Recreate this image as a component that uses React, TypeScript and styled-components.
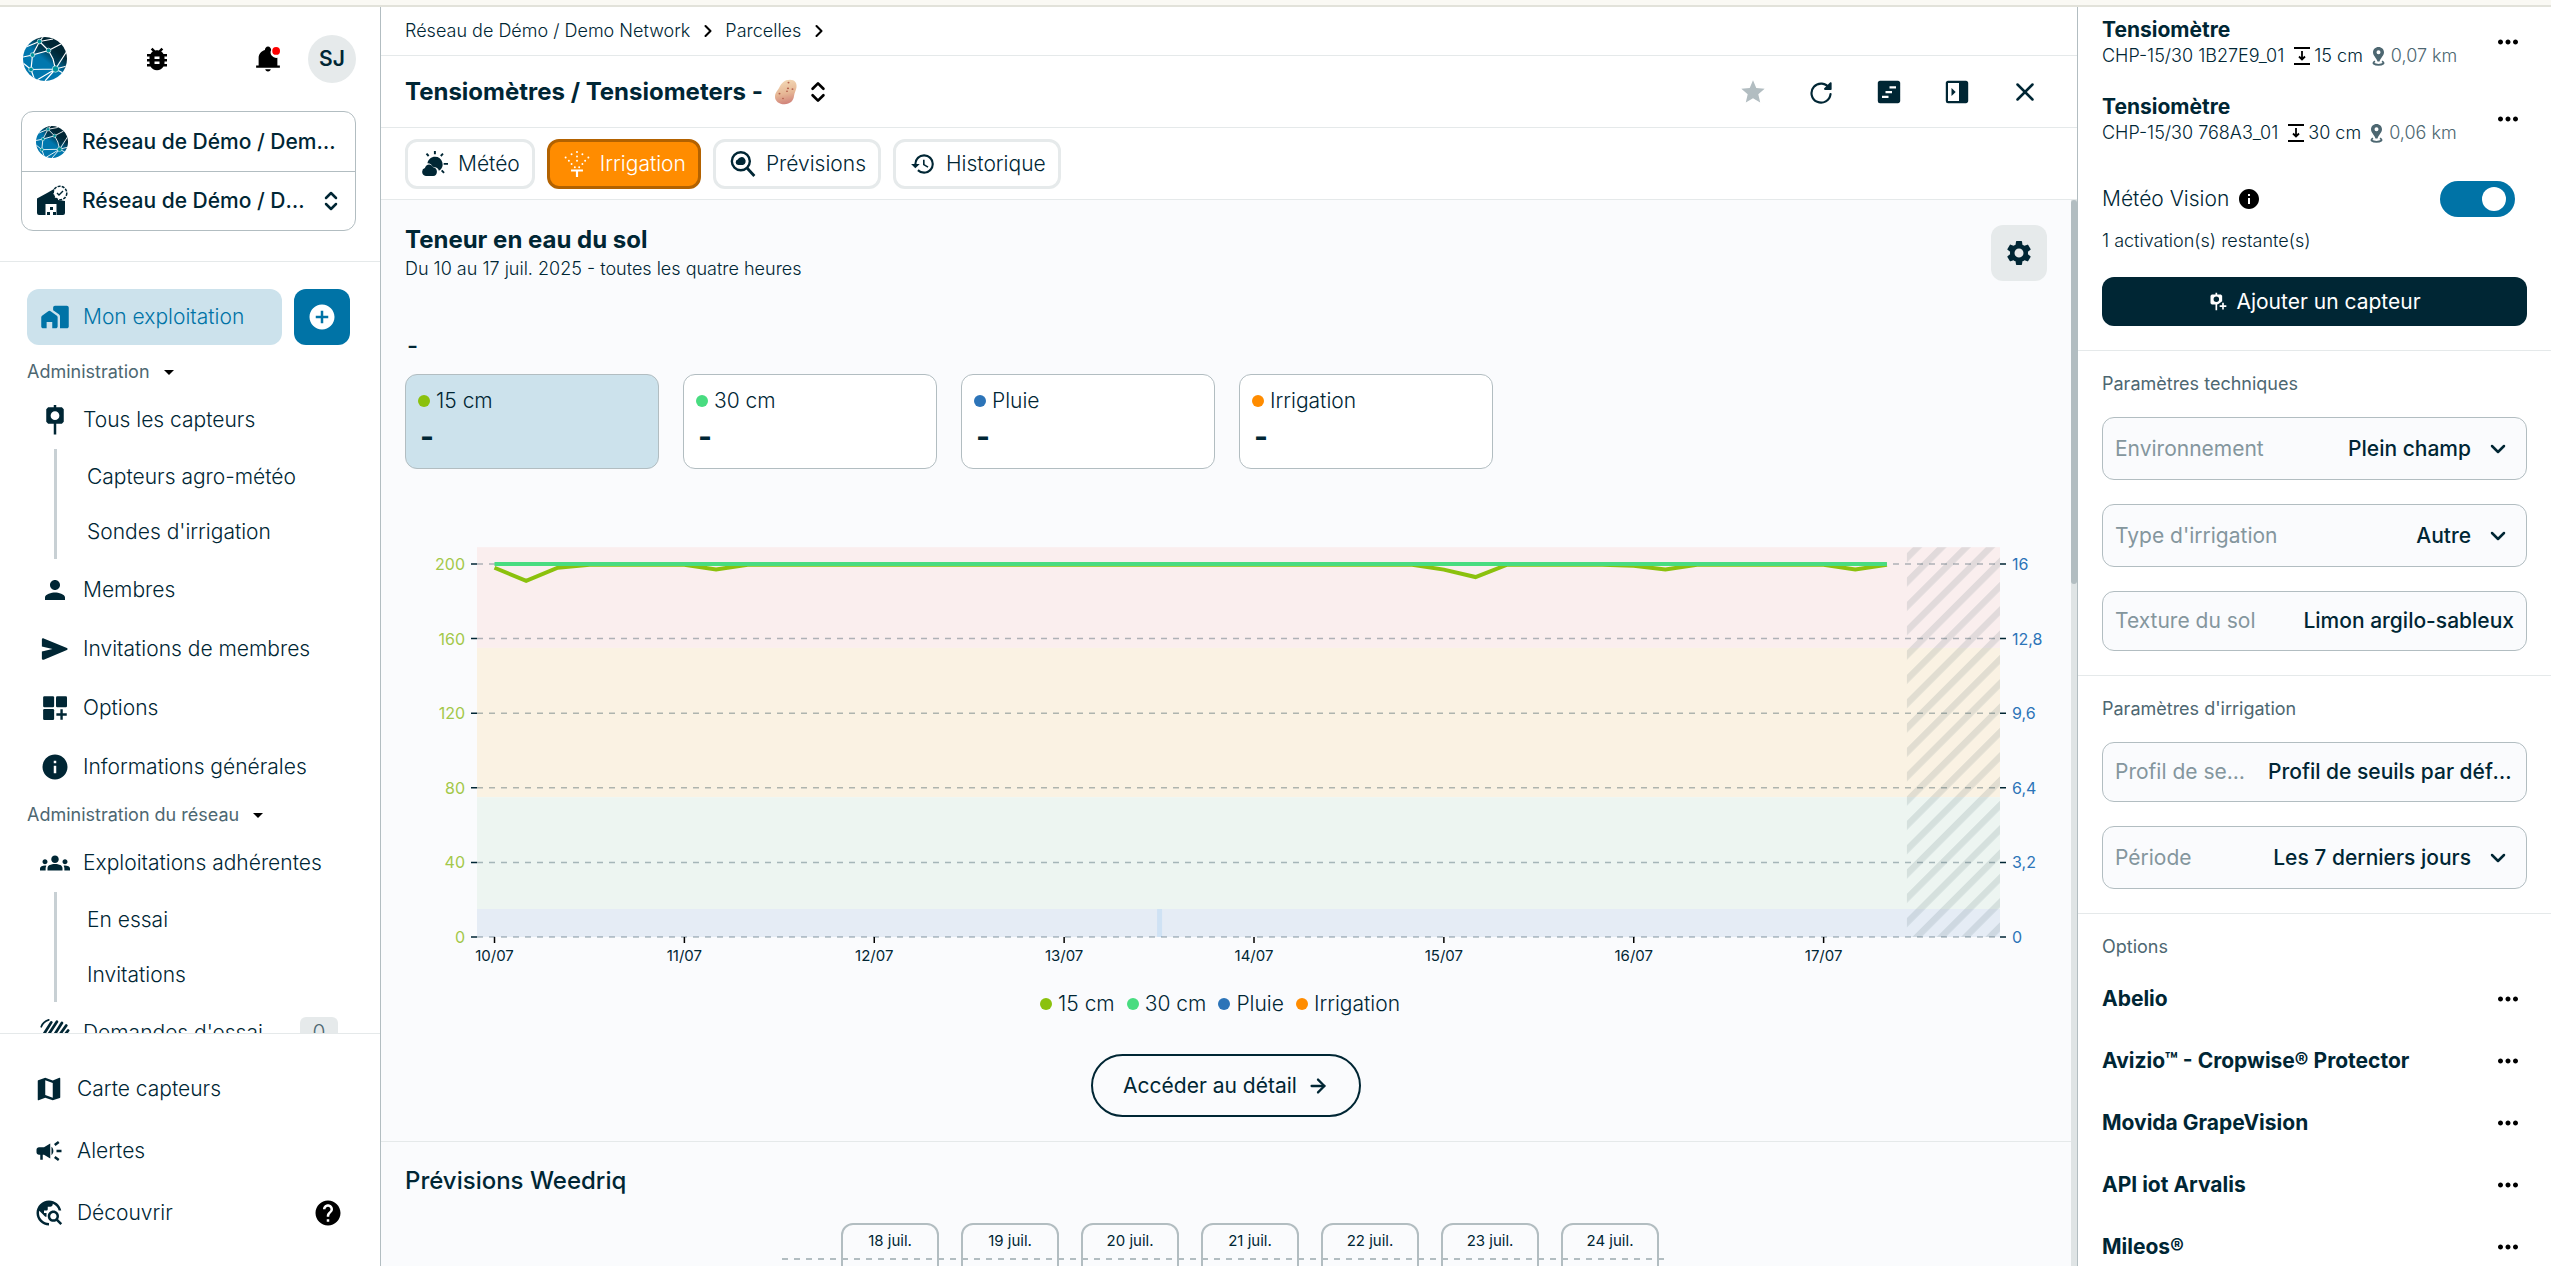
import React, { useId, useLayoutEffect, useRef, useState } from "react";
import styled, { createGlobalStyle, css } from "styled-components";
import { ArrowRight, ChevronDown, ChevronRight, ChevronsUpDown, X } from "lucide-react";
import {
  MdAddCircle,
  MdArrowDropDown,
  MdBugReport,
  MdCampaign,
  MdGroups,
  MdHelp,
  MdHistory,
  MdInfo,
  MdMap,
  MdMoreHoriz,
  MdPerson,
  MdSettings,
  MdStar,
  MdTravelExplore,
} from "react-icons/md";

const color = {
  ink: "#002634",
  muted: "#4d6771",
  faint: "#84969d",
  line: "#b2bdc1",
  rule: "#e5e9ea",
  chip: "#e6eaeb",
  page: "#fafbfd",
  blue: "#0073a6",
  sky: "#cce2ec",
  orange: "#ff8c00",
  lime: "#8bc10d",
  mint: "#48dc80",
  rain: "#2c74b8",
};

const GlobalStyle = createGlobalStyle`
  *, *::before, *::after { box-sizing: border-box; }
  body {
    margin: 0;
    color: ${color.ink};
    background: #fff;
    font-family: Inter, "Liberation Sans", sans-serif;
    font-size: 21px;
    line-height: 24px;
    overflow: hidden;
  }
  button, select, input { font: inherit; color: inherit; }
  button { padding: 0; border: 0; background: none; cursor: pointer; }
  h1, h2, h3, p, ul { margin: 0; padding: 0; }
  ul { list-style: none; }
  a { color: inherit; text-decoration: none; }
  svg { display: block; flex: none; }
`;

/* ---------- drawings ---------- */

type IconProps = { size?: number };

const Glyph = ({ size = 30, children }: IconProps & { children: React.ReactNode }) => (
  <svg width={size} height={size} viewBox="0 0 24 24" fill="currentColor" aria-hidden="true">
    {children}
  </svg>
);

const Logo = ({ size }: { size: number }) => {
  const id = useId();
  return (
    <svg width={size} height={size} viewBox="0 0 44 44" aria-hidden="true">
      <defs>
        <linearGradient id={`${id}g`} x1="0.2" y1="0.85" x2="0.8" y2="0.1">
          <stop offset="0.45" stopColor="#0077ae" />
          <stop offset="0.8" stopColor="#002634" />
        </linearGradient>
        <clipPath id={`${id}c`}>
          <circle cx="22" cy="22" r="22" />
        </clipPath>
      </defs>
      <g clipPath={`url(#${id}c)`}>
        <rect width="44" height="44" fill={`url(#${id}g)`} />
        <path d="M16 4 25 13 9 18ZM20 0l5 13 18-9-10 28Z" fill="#002634" opacity="0.55" />
        <g stroke="#fff" strokeWidth="1.2" fill="none">
          <path d="M16.500 4.500 25.500 13.500 9.500 18 8 32.500 32.500 32 30 22 25.500 13.500 38 7M32.500 32 44 14M16.500 4.500 9.500 18 0 20M16.500 4.500 3 10M16.500 4.500 20 0M16.500 4.500 30 2M8 32.500 0 26M8 32.500 12 44M32.500 32 14 43M32.500 32 22 44M32.500 32 40 36M32.500 32 44 29" />
        </g>
        <g fill="#00939b" stroke="#fff" strokeWidth="0.6">
          <circle cx="16.500" cy="4.500" r="2.300" />
          <circle cx="25.500" cy="13.500" r="2.300" />
          <circle cx="9.500" cy="18" r="2.300" />
          <circle cx="8" cy="32.500" r="2.300" />
          <circle cx="32.500" cy="32" r="3.200" />
        </g>
      </g>
    </svg>
  );
};

const FarmIcon = () => (
  <svg width="32" height="32" viewBox="0 0 32 32" aria-hidden="true">
    <path d="M1 13.500 12 7.500 18 4v5l4 6 7 1v12a2 2 0 0 1-2 2h-6.500V19h-11v11H3a2 2 0 0 1-2-2Z" fill={color.ink} />
    <path d="M14 22h3v3h-3zM11 27h3v3h-3zM17 27h3v3h-3z" fill={color.ink} />
    <circle cx="24" cy="8" r="6.800" fill="#fff" stroke={color.ink} strokeWidth="1.500" strokeDasharray="3 1.200" />
    <path d="m21 8 2 2 4-4" fill="none" stroke={color.ink} strokeWidth="1.400" />
  </svg>
);

const BellIcon = () => (
  <svg width="30" height="30" viewBox="0 0 24 24" aria-hidden="true">
    <path d="M2.500 19v-1.800h2V11c0-3 2-5.500 5-6.300C9.500 3.500 10.500 2 12 2s2.500 1.500 2.500 2.700A4.500 4.500 0 0 0 19.500 11v6.200h2V19zM12 22c-1.200 0-2.200-.9-2.200-1.800h4.400c0 .9-1 1.800-2.200 1.800z" fill="#000" />
    <circle cx="18.500" cy="5.500" r="3.100" fill="#f00" />
  </svg>
);

const HomesIcon = () => (
  <Glyph>
    <path d="M1 12.200c0-.5.2-.9.600-1.200l5-3.600a1.600 1.600 0 0 1 1.900 0l5 3.600c.4.300.6.700.6 1.200v7.300c0 .8-.7 1.500-1.500 1.500H9.800v-5H5.300v5H2.500C1.700 21 1 20.300 1 19.500z" />
    <path d="M10.500 4.500C10.500 3.700 11.200 3 12 3h9.500c.8 0 1.500.7 1.500 1.500v15c0 .8-.7 1.500-1.500 1.500H16v-9.500c0-.7-.3-1.300-.9-1.700l-4.600-3.300z" />
  </Glyph>
);

const SensorIcon = () => (
  <Glyph>
    <path fillRule="evenodd" d="M11 0h2v1.800h4.500L19 3.300v10L17.500 15H13v8.500h-2V15H6.500L5 13.300v-10l1.500-1.500H11zM12 5a3.500 3.500 0 1 0 0 7A3.500 3.500 0 0 0 12 5z" />
  </Glyph>
);

const SensorAddIcon = ({ size = 20 }: IconProps) => (
  <Glyph size={size}>
    <path fillRule="evenodd" d="M9 1h2v2h4.500L17 4.500v6.700l-4 2.800-2 1v7H9v-7H4.500L3 13.500v-9L4.500 3H9zm1 4.500a3.300 3.300 0 1 0 0 6.600 3.300 3.300 0 0 0 0-6.600z" />
    <path d="M17 13h2v3h3v2h-3v3h-2v-3h-3v-2h3z" />
  </Glyph>
);

const SendIcon = () => (
  <Glyph>
    <path d="M1.500 18.500V14L10 12 1.500 10V4.500c0-.9.800-1.300 1.500-1l18.500 7.700c.8.300.8 1.300 0 1.600L3 20.500c-.7.300-1.500-.1-1.500-1z" />
  </Glyph>
);

const WidgetsIcon = () => (
  <Glyph>
    <rect x="2.500" y="2.500" width="8.800" height="8.800" rx="1" />
    <rect x="12.800" y="2.500" width="8.800" height="8.800" rx="1" />
    <rect x="2.500" y="12.800" width="8.800" height="8.800" rx="1" />
    <path d="M16.300 13h1.900v3.200h3.200v1.900h-3.200v3.200h-1.900v-3.200h-3.200v-1.900h3.200z" />
  </Glyph>
);

const WaveHandIcon = () => (
  <Glyph>
    <g stroke="currentColor" strokeWidth="2.200" strokeLinecap="round" fill="none">
      <path d="M3 13 9 3.500M5 16 13.500 3M8 19 17.500 4M11 20 21 6M14 21 22.500 10M4 12c-3 6 2 11 7 10" />
      <path d="M1 7C2 4 4 2.500 7 1.500" strokeWidth="1.400" />
    </g>
  </Glyph>
);

const SunCloudIcon = ({ size }: IconProps) => (
  <Glyph size={size}>
    <path d="M11 0h1.800v3H11zM3.500 3l1.300-1.200 2 2.200-1.300 1.200zM18.800 1.800 20 3l-2 2.200-1.300-1.200zM20 11h4v1.800h-4zM17.500 18.500l1.300-1.200 2.200 2.200-1.300 1.200z" />
    <path d="M9.800 14.500A4.900 4.900 0 0 0 5 11.200c.8-3.400 3.600-5.900 7-5.900a7 7 0 0 1 3.600 13c-.4-2-2.200-3.500-5.800-3.800z" />
    <path d="M3.500 23a3.700 3.700 0 0 1-.8-7.200c.6-4 6-4.800 7.500-.8 4.500-.2 5 8 0 8z" />
  </Glyph>
);

const SprinklerIcon = ({ size }: IconProps) => (
  <Glyph size={size}>
    <path d="M6.500 17h11v2H13v5h-2v-5H6.500z" />
    {[[12, 1], [12, 5], [12, 9], [1.500, 6], [4.500, 9], [7, 12], [10, 15], [22.500, 6], [19.500, 9], [17, 12], [14, 15], [7, 3], [17, 3]].map(([x, y]) => (
      <circle key={`${x}-${y}`} cx={x} cy={y} r="0.900" />
    ))}
  </Glyph>
);

const ForecastIcon = ({ size }: IconProps) => (
  <Glyph size={size}>
    <circle cx="10" cy="9.500" r="8.300" fill="none" stroke="currentColor" strokeWidth="2.200" />
    <path d="m15.500 15.500 7 7.500" stroke="currentColor" strokeWidth="2.600" />
    <path d="M7.500 13a2.600 2.600 0 0 1-.3-5.100A3.800 3.800 0 1 1 12 13z" />
  </Glyph>
);

const RefreshIcon = () => (
  <Glyph size={26}>
    <path d="M19.600 8.500A8.800 8.800 0 1 0 20.800 14" fill="none" stroke="currentColor" strokeWidth="2" strokeLinecap="round" />
    <path d="M20.300 3.300c.6-.6 1.500-.2 1.500.7v5.200c0 .5-.4.900-.9.900h-5.200c-.8 0-1.200-1-.7-1.500z" />
  </Glyph>
);

const GanttIcon = () => (
  <Glyph size={24}>
    <path fillRule="evenodd" d="M3 .8h18c1.200 0 2.200 1 2.200 2.200v18c0 1.200-1 2.200-2.200 2.200H3A2.200 2.200 0 0 1 .8 21V3C.8 1.800 1.800.8 3 .8zM12.500 6.200v2.300h6.500V6.200zM8.500 11v2.300h6.500V11zM5 15.800v2.300h6.500v-2.300z" />
  </Glyph>
);

const PanelIcon = () => (
  <Glyph size={24}>
    <path fillRule="evenodd" d="M3 .8h18c1.200 0 2.200 1 2.200 2.200v18c0 1.200-1 2.200-2.200 2.200H3A2.200 2.200 0 0 1 .8 21V3C.8 1.800 1.800.8 3 .8zM3 3v18h11V3z" />
    <path d="m6.500 8 4.200 4-4.200 4z" />
  </Glyph>
);

const DepthIcon = () => (
  <svg width="18" height="20" viewBox="0 0 18 20" aria-hidden="true">
    <path d="M1 2h16M1 18h16M9 5v8M6 10.500l3 3 3-3" fill="none" stroke="#000" strokeWidth="1.800" />
  </svg>
);

const PinIcon = () => (
  <svg width="13" height="20" viewBox="0 0 13 20" aria-hidden="true" fill="currentColor">
    <path fillRule="evenodd" d="M6.500 1C3.400 1 1 3.400 1 6.300 1 9.800 4.500 12 5.500 15.500h2C8.500 12 12 9.800 12 6.300 12 3.400 9.600 1 6.500 1zm0 3.200a2 2 0 1 1 0 4 2 2 0 0 1 0-4z" />
    <path d="M3 15.300c-3.500 2-.500 3.500 3.500 3.500s7-1.500 3.500-3.500" fill="none" stroke="currentColor" strokeWidth="1.800" />
  </svg>
);

const Potato = () => (
  <svg width="24" height="26" viewBox="0 0 24 32" preserveAspectRatio="none" role="img" aria-label="Pomme de terre">
    <defs>
      <linearGradient id="potato-skin" x1="0.4" y1="0" x2="0.6" y2="1">
        <stop offset="0" stopColor="#f3d9b6" />
        <stop offset="0.55" stopColor="#e6b795" />
        <stop offset="1" stopColor="#cf7f78" />
      </linearGradient>
    </defs>
    <path d="M16 1c5 0 7 4 6.500 9-.5 4-2 6-2.500 11-.5 6-4 10-9.500 10S1 27 1 22c0-5 2-7 4-11C7.500 5 10.500 1 16 1z" fill="url(#potato-skin)" />
    <g fill="#b4614d">
      <circle cx="14.500" cy="4.500" r="1" />
      <circle cx="14" cy="11.500" r="1.100" />
      <circle cx="18.500" cy="12.500" r="1" />
      <circle cx="13" cy="15" r="1" />
      <circle cx="5.500" cy="18" r="1" />
      <circle cx="9" cy="24" r="0.900" />
    </g>
  </svg>
);

/* ---------- shell ---------- */

const Shell = styled.div`
  display: grid;
  grid-template-columns: 381px minmax(0, 1fr) 474px;
  height: 100vh;
  border-top: 5px solid #faf9f4;
  box-shadow: inset 0 2px 0 #e2e2da;
  padding-top: 2px;
`;

const Sidebar = styled.aside`
  display: flex;
  flex-direction: column;
  min-height: 0;
  border-right: 1px solid ${color.line};
`;

const SideTop = styled.header`
  display: flex;
  flex-direction: column;
  gap: 28px;
  padding: 28px 24px 30px 21px;
  border-bottom: 1px solid ${color.rule};
`;

const SideTopBar = styled.div`
  display: flex;
  align-items: center;
  justify-content: space-between;
  padding-left: 2px;
`;

const IconButton = styled.button<{ $color?: string }>`
  display: grid;
  place-items: center;
  width: 44px;
  height: 44px;
  color: ${(p) => p.$color ?? color.ink};
`;

const TopActions = styled.div`
  display: flex;
  align-items: center;
  gap: 18px;
`;

const Avatar = styled.button`
  width: 48px;
  height: 48px;
  border-radius: 50%;
  background: ${color.chip};
  font-weight: 600;
`;

const OrgBox = styled.div`
  border: 1px solid ${color.line};
  border-radius: 12px;
`;

const OrgRow = styled.button`
  display: flex;
  align-items: center;
  gap: 14px;
  width: 100%;
  height: 59px;
  padding: 0 12px 0 14px;
  font-weight: 500;
  text-align: left;
  & + & {
    border-top: 1px solid ${color.line};
  }
`;

const Clip = styled.span`
  flex: 1;
  min-width: 0;
  overflow: hidden;
  text-overflow: ellipsis;
  white-space: nowrap;
`;

const NavScroll = styled.nav`
  flex: 1;
  min-height: 0;
  overflow: hidden;
  padding: 27px 30px 0 27px;
`;

const FarmRow = styled.div`
  display: flex;
  gap: 12px;
  padding-bottom: 8px;
`;

const FarmLink = styled.a`
  display: flex;
  flex: 1;
  align-items: center;
  gap: 13px;
  height: 56px;
  padding: 0 13px;
  border-radius: 12px;
  color: ${color.blue};
  background: ${color.sky};
  font-weight: 300;
`;

const AddFarm = styled.button`
  display: grid;
  place-items: center;
  width: 56px;
  height: 56px;
  border-radius: 12px;
  color: #fff;
  background: ${color.blue};
`;

const GroupTitle = styled.button`
  display: flex;
  align-items: center;
  gap: 7px;
  height: 37px;
  color: ${color.muted};
  font-size: 18px;
  svg {
    color: #000;
  }
`;

const NavLink = styled.a`
  display: flex;
  align-items: center;
  gap: 13px;
  height: 59px;
  padding: 0 12px 0 13px;
  font-weight: 300;
`;

const SubList = styled.ul`
  margin: 0 0 1px 27px;
  padding-left: 30px;
  border-left: 3px solid #c8d0d4;
  font-weight: 300;
`;

const SubLink = styled.a`
  display: flex;
  align-items: center;
  height: 55px;
`;

const Counter = styled.span`
  width: 38px;
  margin-left: auto;
  border-radius: 6px;
  color: ${color.muted};
  background: ${color.chip};
  line-height: 32px;
  text-align: center;
`;

const SideFoot = styled.footer`
  padding: 24px 37px 22px 34px;
  border-top: 1px solid ${color.rule};
`;

const FootRow = styled.div`
  display: flex;
  align-items: center;
  justify-content: space-between;
  height: 62px;
  font-weight: 300;
  a {
    display: flex;
    align-items: center;
    gap: 13px;
  }
  button {
    color: #000;
  }
`;

/* ---------- main column ---------- */

const Main = styled.main`
  display: flex;
  flex-direction: column;
  min-width: 0;
  min-height: 0;
`;

const Bar = styled.div<{ $height: number; $gap?: number }>`
  display: flex;
  flex: none;
  align-items: center;
  gap: ${(p) => p.$gap ?? 0}px;
  height: ${(p) => p.$height}px;
  padding: 0 30px 0 24px;
  border-bottom: 1px solid ${color.rule};
`;

const Crumb = styled.a`
  display: flex;
  align-items: center;
  gap: 8px;
  font-size: 18px;
  font-weight: 300;
  svg {
    color: #000;
  }
`;

const Title = styled.h1`
  font-size: 24px;
  font-weight: 700;
`;

const Crop = styled.div`
  display: flex;
  align-items: center;
  gap: 6px;
`;

const Switcher = styled.button`
  display: grid;
  place-items: center;
  width: 28px;
  height: 36px;
  color: #000;
`;

const BarActions = styled.div`
  display: flex;
  gap: 24px;
  margin-left: auto;
`;

const Tab = styled.button<{ $active?: boolean }>`
  display: flex;
  align-items: center;
  gap: 10px;
  height: 50px;
  padding: 0 12px 0 14px;
  border: 3px solid ${color.chip};
  border-radius: 12px;
  background: #fff;
  font-weight: 300;
  ${(p) =>
    p.$active &&
    css`
      border-color: #b36200;
      color: #fff;
      background: ${color.orange};
    `}
`;

const ScrollArea = styled.div`
  display: flex;
  flex: 1;
  min-height: 0;
  background: ${color.page};
`;

const ScrollBody = styled.div`
  flex: 1;
  min-width: 0;
  overflow: hidden;
`;

const ScrollRail = styled.div`
  flex: none;
  width: 6px;
  background: #dfe4e5;
`;

const ScrollThumb = styled.div`
  height: 36%;
  border-radius: 3px;
  background: ${color.line};
`;

const Section = styled.section`
  padding: 24px 24px;
  border-bottom: 1px solid ${color.rule};
`;

const SectionHead = styled.div`
  display: flex;
  align-items: center;
  justify-content: space-between;
  padding-top: 1px;
`;

const HeadText = styled.div`
  display: flex;
  flex-direction: column;
  gap: 2px;
`;

const SectionTitle = styled.h2<{ $weight?: number }>`
  font-size: 24px;
  font-weight: ${(p) => p.$weight ?? 700};
  line-height: 30px;
`;

const SmallText = styled.p`
  font-size: 18px;
  font-weight: 300;
`;

const GearButton = styled.button`
  display: grid;
  place-items: center;
  width: 56px;
  height: 56px;
  border-radius: 12px;
  background: ${color.chip};
`;

const HoverDate = styled.p`
  padding: 50px 0 13px 2px;
  font-size: 24px;
  font-weight: 500;
  line-height: 30px;
`;

const Cards = styled.div`
  display: flex;
  gap: 24px;
`;

const Card = styled.button<{ $active?: boolean }>`
  display: flex;
  flex-direction: column;
  gap: 8px;
  width: 254px;
  height: 95px;
  padding: 14px 12px;
  border: 1px solid ${color.line};
  border-radius: 12px;
  background: ${(p) => (p.$active ? color.sky : "#fff")};
  text-align: left;
`;

const CardValue = styled.strong`
  padding-left: 2px;
  font-size: 30px;
  font-weight: 700;
  line-height: 30px;
`;

const Series = styled.span`
  display: flex;
  align-items: center;
  gap: 6px;
  font-weight: 300;
`;

const Dot = styled.i<{ $color: string }>`
  width: 12px;
  height: 12px;
  border-radius: 50%;
  background: ${(p) => p.$color};
`;

const ChartBox = styled.div`
  margin-top: 78px;
  svg {
    width: 100%;
  }
`;

const Legend = styled.ul`
  display: flex;
  justify-content: center;
  margin-top: 25px;
  li {
    margin-right: 12px;
  }
`;

const DetailRow = styled.div`
  display: flex;
  justify-content: center;
  margin-top: 38px;
`;

const DetailLink = styled.a`
  display: flex;
  align-items: center;
  gap: 10px;
  height: 63px;
  padding: 0 30px;
  border: 2px solid ${color.ink};
  border-radius: 32px;
`;

const Forecast = styled.div`
  position: relative;
  display: flex;
  justify-content: center;
  gap: 22px;
  width: fit-content;
  margin: 27px auto 0;
  padding: 0 11px 0 59px;
  &::after {
    content: "";
    position: absolute;
    top: 35px;
    left: 0;
    right: 6px;
    height: 2px;
    background: repeating-linear-gradient(90deg, ${color.line} 0 6px, transparent 6px 12px);
  }
`;

const Day = styled.div`
  width: 98px;
  height: 300px;
  padding-top: 4px;
  border: 2px solid ${color.line};
  border-radius: 12px;
  font-size: 15px;
  text-align: center;
`;

/* ---------- right panel ---------- */

const Panel = styled.aside`
  min-height: 0;
  overflow: hidden;
  border-left: 1px solid ${color.line};
`;

const Block = styled.section<{ $top: number }>`
  padding: ${(p) => p.$top}px 24px 24px;
  & + & {
    border-top: 1px solid ${color.rule};
  }
`;

const Device = styled.div`
  display: flex;
  align-items: center;
  justify-content: space-between;
  height: 70px;
  & + & {
    margin-top: 7px;
  }
`;

const DeviceText = styled.div`
  padding-top: 2px;
`;

const Strong = styled.h3`
  font-size: 21px;
  font-weight: 700;
`;

const DeviceMeta = styled.p`
  display: flex;
  align-items: center;
  gap: 9px;
  padding-top: 2px;
  font-size: 18px;
  font-weight: 300;
`;

const Measure = styled.span<{ $muted?: boolean }>`
  display: flex;
  align-items: center;
  gap: ${(p) => (p.$muted ? 6 : 3)}px;
  color: ${(p) => (p.$muted ? color.muted : "inherit")};
`;

const More = styled.button`
  display: grid;
  place-items: center;
  width: 38px;
  height: 38px;
  color: #000;
`;

const ToggleRow = styled.div`
  display: flex;
  align-items: center;
  gap: 8px;
  margin: 27px 12px 12px 0;
  font-weight: 300;
  svg {
    color: #000;
  }
`;

const Toggle = styled.input`
  appearance: none;
  display: flex;
  align-items: center;
  justify-content: flex-end;
  width: 75px;
  height: 36px;
  margin: 0 0 0 auto;
  padding: 0 9px;
  border-radius: 18px;
  background: ${color.blue};
  &::before {
    content: "";
    width: 24px;
    height: 24px;
    border-radius: 50%;
    background: #fff;
  }
`;

const Primary = styled.button`
  display: flex;
  align-items: center;
  justify-content: center;
  gap: 8px;
  width: 100%;
  height: 49px;
  margin-top: 24px;
  border-radius: 12px;
  color: #fff;
  background: ${color.ink};
`;

const Caption = styled.h2`
  color: ${color.muted};
  font-size: 18px;
  font-weight: 400;
  line-height: 24px;
`;

const Fields = styled.div`
  display: flex;
  flex-direction: column;
  gap: 24px;
  margin-top: 21px;
`;

const fieldBox = css`
  display: flex;
  align-items: center;
  gap: 12px;
  width: 100%;
  padding: 0 12px;
  border: 1px solid ${color.line};
  border-radius: 12px;
  background: ${color.page};
`;

const SelectField = styled.div`
  ${fieldBox}
  height: 63px;
  label {
    color: ${color.faint};
    white-space: nowrap;
  }
`;

const SelectStack = styled.div`
  display: grid;
  flex: 1;
  align-items: center;
  justify-items: end;
  padding-right: 4px;
  select,
  svg {
    grid-area: 1 / 1;
  }
  svg {
    pointer-events: none;
  }
  select {
    appearance: none;
    width: 100%;
    height: 61px;
    padding: 0 39px 0 0;
    border: 0;
    background: transparent;
    font-weight: 500;
    text-align-last: right;
  }
`;

const ButtonField = styled.button`
  ${fieldBox}
  height: 60px;
  text-align: right;
`;

const FieldName = styled.span`
  flex: none;
  max-width: 141px;
  overflow: hidden;
  color: ${color.faint};
  text-overflow: ellipsis;
  white-space: nowrap;
`;

const FieldValue = styled(Clip)`
  font-weight: 500;
`;

const OptionRow = styled.li`
  display: flex;
  align-items: center;
  justify-content: space-between;
  height: 62px;
`;

const OptionList = styled.ul`
  margin-top: 9px;
`;

/* ---------- data ---------- */

const series = [
  { name: "15 cm", tint: color.lime },
  { name: "30 cm", tint: color.mint },
  { name: "Pluie", tint: color.rain },
  { name: "Irrigation", tint: color.orange },
];

const STEPS = 45;
const dips: Record<number, number> = { 0: 198, 1: 191, 2: 198, 7: 197, 30: 197, 31: 193, 36: 199, 37: 197, 43: 197 };
const shallow = Array.from({ length: STEPS }, (_, i) => dips[i] ?? 199.6);
const days = ["10/07", "11/07", "12/07", "13/07", "14/07", "15/07", "16/07", "17/07"];
const leftTicks = [200, 160, 120, 80, 40, 0];
const rightTicks = ["16", "12,8", "9,6", "6,4", "3,2", "0"];
const bands = [
  { from: 155, to: 209, fill: "#faeeee" },
  { from: 75, to: 155, fill: "#faf2e3" },
  { from: 15, to: 75, fill: "#edf5f1" },
  { from: 0, to: 15, fill: "#e5ecf5" },
];

const Chart = () => {
  const box = useRef<HTMLDivElement>(null);
  const [width, setWidth] = useState(1642);
  useLayoutEffect(() => {
    const el = box.current;
    if (!el) return;
    const measure = () => setWidth(el.clientWidth);
    measure();
    const observer = new ResizeObserver(measure);
    observer.observe(el);
    return () => observer.disconnect();
  }, []);

  const left = 72;
  const right = width - 47;
  const plot = right - left;
  const x = (step: number) => left + plot * 0.0115 + (step * plot * 0.12467) / 6;
  const y = (v: number) => 390 - v * 1.865;
  const hatch = x(44) + 20;

  return (
    <ChartBox ref={box}>
      <svg height="420" aria-label="Teneur en eau du sol" role="img">
        <defs>
          <pattern id="hatch" width="17.200" height="17.200" patternUnits="userSpaceOnUse" patternTransform="rotate(45)">
            <rect width="6.500" height="17.200" fill={color.ink} opacity="0.1" />
          </pattern>
        </defs>
        {bands.map((b) => (
          <rect key={b.from} x={left} width={plot} y={y(b.to)} height={y(b.from) - y(b.to)} fill={b.fill} />
        ))}
        <rect x={x(21) - 2} y={y(15)} width="5" height={y(0) - y(15)} fill="#cfe2f4" />
        {leftTicks.map((v, i) => (
          <g key={v} fontSize="16">
            <path d={`M${left} ${y(v)}H${right}`} stroke={color.ink} strokeOpacity="0.3" strokeWidth="1.500" strokeDasharray="6 6" />
            <path d={`M${left - 6} ${y(v)}h6M${right} ${y(v)}h6`} stroke={color.ink} strokeWidth="1.500" />
            <text x={left - 12} y={y(v) + 6} textAnchor="end" fill="#a3c849">{v}</text>
            <text x={right + 12} y={y(v) + 6} fill={color.rain}>{rightTicks[i]}</text>
          </g>
        ))}
        <rect x={hatch} y={y(209)} width={right - hatch} height={y(0) - y(209)} fill="url(#hatch)" />
        {days.map((d, i) => (
          <g key={d} fontSize="15">
            <path d={`M${x(i * 6)} ${y(0)}v6`} stroke="#000" strokeWidth="1.500" />
            <text x={x(i * 6)} y={y(0) + 24} textAnchor="middle" fill={color.ink}>{d}</text>
          </g>
        ))}
        <polyline points={shallow.map((v, i) => `${x(i)},${y(v)}`).join(" ")} fill="none" stroke={color.lime} strokeWidth="4" />
        <path d={`M${x(0)} ${y(200)}H${x(44)}`} stroke={color.mint} strokeWidth="4" />
      </svg>
    </ChartBox>
  );
};

const SeriesLabel = ({ name, tint }: { name: string; tint: string }) => (
  <Series>
    <Dot $color={tint} />
    {name}
  </Series>
);

const Select = ({ id, label, value }: { id: string; label: string; value: string }) => (
  <SelectField>
    <label htmlFor={id}>{label}</label>
    <SelectStack>
      <select id={id} defaultValue={value}>
        <option>{value}</option>
      </select>
      <ChevronDown size={24} strokeWidth={2.500} />
    </SelectStack>
  </SelectField>
);

const Picker = ({ label, value }: { label: string; value: string }) => (
  <ButtonField>
    <FieldName>{label}</FieldName>
    <FieldValue>{value}</FieldValue>
  </ButtonField>
);

const DeviceRow = ({ code, depth, distance }: { code: string; depth: string; distance: string }) => (
  <Device>
    <DeviceText>
      <Strong>Tensiomètre</Strong>
      <DeviceMeta>
        {code}
        <Measure>
          <DepthIcon />
          {depth}
        </Measure>
        <Measure $muted>
          <PinIcon />
          {distance}
        </Measure>
      </DeviceMeta>
    </DeviceText>
    <More aria-label="Plus d'actions">
      <MdMoreHoriz size={30} />
    </More>
  </Device>
);

export default function App() {
  return (
    <>
      <GlobalStyle />
      <Shell>
        <Sidebar>
          <SideTop>
            <SideTopBar>
              <Logo size={44} />
              <IconButton $color="#000" aria-label="Signaler un bug">
                <MdBugReport size={30} />
              </IconButton>
              <TopActions>
                <IconButton aria-label="Notifications">
                  <BellIcon />
                </IconButton>
                <Avatar>SJ</Avatar>
              </TopActions>
            </SideTopBar>
            <OrgBox>
              <OrgRow>
                <Logo size={32} />
                <Clip>Réseau de Démo / Demo Network</Clip>
              </OrgRow>
              <OrgRow>
                <FarmIcon />
                <Clip>Réseau de Démo / Demo Network</Clip>
                <ChevronsUpDown size={24} strokeWidth={2.500} />
              </OrgRow>
            </OrgBox>
          </SideTop>

          <NavScroll>
            <FarmRow>
              <FarmLink href="#">
                <HomesIcon />
                Mon exploitation
              </FarmLink>
              <AddFarm aria-label="Ajouter">
                <MdAddCircle size={30} />
              </AddFarm>
            </FarmRow>
            <GroupTitle>
              Administration
              <MdArrowDropDown size={24} />
            </GroupTitle>
            <NavLink href="#"><SensorIcon />Tous les capteurs</NavLink>
            <SubList>
              <li><SubLink href="#">Capteurs agro-météo</SubLink></li>
              <li><SubLink href="#">Sondes d'irrigation</SubLink></li>
            </SubList>
            <NavLink href="#"><MdPerson size={30} />Membres</NavLink>
            <NavLink href="#"><SendIcon />Invitations de membres</NavLink>
            <NavLink href="#"><WidgetsIcon />Options</NavLink>
            <NavLink href="#"><MdInfo size={30} />Informations générales</NavLink>
            <GroupTitle>
              Administration du réseau
              <MdArrowDropDown size={24} />
            </GroupTitle>
            <NavLink href="#"><MdGroups size={30} />Exploitations adhérentes</NavLink>
            <SubList>
              <li><SubLink href="#">En essai</SubLink></li>
              <li><SubLink href="#">Invitations</SubLink></li>
            </SubList>
            <NavLink href="#">
              <WaveHandIcon />
              Demandes d'essai
              <Counter>0</Counter>
            </NavLink>
          </NavScroll>

          <SideFoot>
            <FootRow><a href="#"><MdMap size={30} />Carte capteurs</a></FootRow>
            <FootRow><a href="#"><MdCampaign size={30} />Alertes</a></FootRow>
            <FootRow>
              <a href="#"><MdTravelExplore size={30} />Découvrir</a>
              <button aria-label="Aide"><MdHelp size={30} /></button>
            </FootRow>
          </SideFoot>
        </Sidebar>

        <Main>
          <Bar $height={49} $gap={7}>
            <Crumb href="#">Réseau de Démo / Demo Network <ChevronRight size={20} strokeWidth={2.500} /></Crumb>
            <Crumb href="#">Parcelles <ChevronRight size={20} strokeWidth={2.500} /></Crumb>
          </Bar>
          <Bar $height={72} $gap={11}>
            <Title>Tensiomètres / Tensiometers -</Title>
            <Crop>
              <Potato />
              <Switcher aria-label="Changer de parcelle">
                <ChevronsUpDown size={26} strokeWidth={2.500} />
              </Switcher>
            </Crop>
            <BarActions>
              <IconButton $color={color.line} aria-label="Favori"><MdStar size={28} /></IconButton>
              <IconButton aria-label="Rafraîchir"><RefreshIcon /></IconButton>
              <IconButton aria-label="Journal"><GanttIcon /></IconButton>
              <IconButton aria-label="Panneau"><PanelIcon /></IconButton>
              <IconButton aria-label="Fermer"><X size={30} strokeWidth={2} /></IconButton>
            </BarActions>
          </Bar>
          <Bar $height={72} $gap={12}>
            <Tab><SunCloudIcon size={26} />Météo</Tab>
            <Tab $active><SprinklerIcon size={26} />Irrigation</Tab>
            <Tab><ForecastIcon size={26} />Prévisions</Tab>
            <Tab><MdHistory size={26} />Historique</Tab>
          </Bar>

          <ScrollArea>
            <ScrollBody>
              <Section>
                <SectionHead>
                  <HeadText>
                    <SectionTitle>Teneur en eau du sol</SectionTitle>
                    <SmallText>Du 10 au 17 juil. 2025 - toutes les quatre heures</SmallText>
                  </HeadText>
                  <GearButton aria-label="Réglages"><MdSettings size={30} /></GearButton>
                </SectionHead>
                <HoverDate>-</HoverDate>
                <Cards>
                  {series.map((s, i) => (
                    <Card key={s.name} $active={i === 0}>
                      <SeriesLabel {...s} />
                      <CardValue>-</CardValue>
                    </Card>
                  ))}
                </Cards>
                <Chart />
                <Legend>
                  {series.map((s) => (
                    <li key={s.name}><SeriesLabel {...s} /></li>
                  ))}
                </Legend>
                <DetailRow>
                  <DetailLink href="#">
                    Accéder au détail
                    <ArrowRight size={22} strokeWidth={2.500} />
                  </DetailLink>
                </DetailRow>
              </Section>
              <Section>
                <SectionTitle $weight={500}>Prévisions Weedriq</SectionTitle>
                <Forecast>
                  {[18, 19, 20, 21, 22, 23, 24].map((d) => (
                    <Day key={d}>{d} juil.</Day>
                  ))}
                </Forecast>
              </Section>
            </ScrollBody>
            <ScrollRail aria-hidden="true">
              <ScrollThumb />
            </ScrollRail>
          </ScrollArea>
        </Main>

        <Panel>
          <Block $top={0}>
            <DeviceRow code="CHP-15/30 1B27E9_01" depth="15 cm" distance="0,07 km" />
            <DeviceRow code="CHP-15/30 768A3_01" depth="30 cm" distance="0,06 km" />
            <ToggleRow>
              <label htmlFor="vision">Météo Vision</label>
              <MdInfo size={24} />
              <Toggle id="vision" type="checkbox" role="switch" defaultChecked />
            </ToggleRow>
            <SmallText>1 activation(s) restante(s)</SmallText>
            <Primary>
              <SensorAddIcon />
              Ajouter un capteur
            </Primary>
          </Block>
          <Block $top={21}>
            <Caption>Paramètres techniques</Caption>
            <Fields>
              <Select id="environment" label="Environnement" value="Plein champ" />
              <Select id="irrigation" label="Type d'irrigation" value="Autre" />
              <Picker label="Texture du sol" value="Limon argilo-sableux" />
            </Fields>
          </Block>
          <Block $top={21}>
            <Caption>Paramètres d'irrigation</Caption>
            <Fields>
              <Picker label="Profil de seuils" value="Profil de seuils par défaut" />
              <Select id="period" label="Période" value="Les 7 derniers jours" />
            </Fields>
          </Block>
          <Block $top={21}>
            <Caption>Options</Caption>
            <OptionList>
              {["Abelio", "Avizio™ - Cropwise® Protector", "Movida GrapeVision", "API iot Arvalis", "Mileos®"].map((name) => (
                <OptionRow key={name}>
                  <Strong>{name}</Strong>
                  <More aria-label={`Plus d'actions ${name}`}><MdMoreHoriz size={30} /></More>
                </OptionRow>
              ))}
            </OptionList>
          </Block>
        </Panel>
      </Shell>
    </>
  );
}
